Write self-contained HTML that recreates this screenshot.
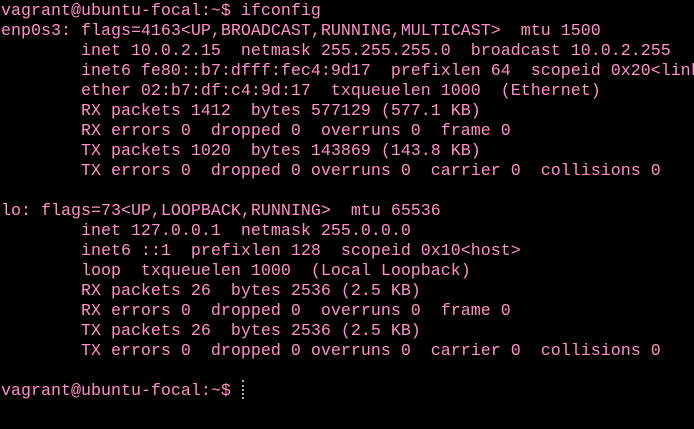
<!DOCTYPE html>
<html><head><meta charset="utf-8"><style>
html,body{margin:0;padding:0;background:#000;width:694px;height:429px;overflow:hidden}
pre{margin:0;padding:0 0 0 1px;font-family:"Liberation Mono","DejaVu Sans Mono",monospace;font-size:16.67px;line-height:20px;color:#ff8fc8;white-space:pre;position:relative;top:2px}
.cur{position:absolute;left:242px;top:380px;width:0;height:19px;border-left:2px dotted #aaa}
</style></head><body>
<pre>vagrant@ubuntu-focal:~$ ifconfig
enp0s3: flags=4163&lt;UP,BROADCAST,RUNNING,MULTICAST&gt;  mtu 1500
        inet 10.0.2.15  netmask 255.255.255.0  broadcast 10.0.2.255
        inet6 fe80::b7:dfff:fec4:9d17  prefixlen 64  scopeid 0x20&lt;link&gt;
        ether 02:b7:df:c4:9d:17  txqueuelen 1000  (Ethernet)
        RX packets 1412  bytes 577129 (577.1 KB)
        RX errors 0  dropped 0  overruns 0  frame 0
        TX packets 1020  bytes 143869 (143.8 KB)
        TX errors 0  dropped 0 overruns 0  carrier 0  collisions 0

lo: flags=73&lt;UP,LOOPBACK,RUNNING&gt;  mtu 65536
        inet 127.0.0.1  netmask 255.0.0.0
        inet6 ::1  prefixlen 128  scopeid 0x10&lt;host&gt;
        loop  txqueuelen 1000  (Local Loopback)
        RX packets 26  bytes 2536 (2.5 KB)
        RX errors 0  dropped 0  overruns 0  frame 0
        TX packets 26  bytes 2536 (2.5 KB)
        TX errors 0  dropped 0 overruns 0  carrier 0  collisions 0

vagrant@ubuntu-focal:~$ </pre>
<div class="cur"></div>
</body></html>
